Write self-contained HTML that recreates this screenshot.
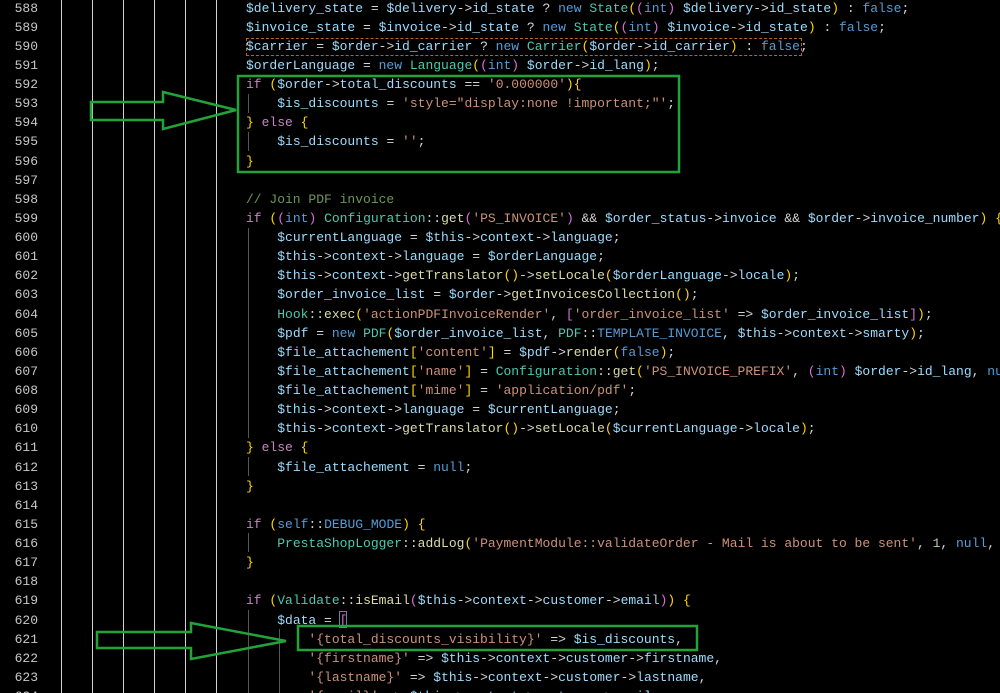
<!DOCTYPE html>
<html><head><meta charset="utf-8"><style>
html,body{margin:0;padding:0;background:#000;width:1000px;height:693px;overflow:hidden;position:relative}
pre{font-family:"Liberation Mono",monospace;font-size:13px;line-height:19.12px;margin:0}
pre.code{position:absolute;left:246px;top:-1.5px;color:#d4d4d4;width:754px;height:695px;overflow:hidden}
.lnc{position:absolute;left:0;top:-1.5px;width:38px;text-align:right;color:#c8c8c8}
.vl{position:absolute;top:0;width:1px;height:693px;background:#d0d0d0}
.g{position:absolute;width:1px;background:#555}
.v{color:#9cdcfe}.k{color:#c586c0}.b{color:#569cd6}.c{color:#4ec9b0}.s{color:#ce9178}.f{color:#dcdcaa}.y{color:#ffd700}.p{color:#da70d6}.m{color:#6a9955}.n{color:#b5cea8}
</style></head><body>
<div class="vl" style="left:61px"></div><div class="vl" style="left:92px"></div><div class="vl" style="left:123px"></div><div class="vl" style="left:154px"></div><div class="vl" style="left:185px"></div><div class="vl" style="left:216px"></div>
<pre class="lnc">588
589
590
591
592
593
594
595
596
597
598
599
600
601
602
603
604
605
606
607
608
609
610
611
612
613
614
615
616
617
618
619
620
621
622
623
624</pre>
<div class="g" style="left:248px;top:94px;height:19px"></div>
<div class="g" style="left:248px;top:132px;height:19px"></div>
<div class="g" style="left:248px;top:228px;height:210px"></div>
<div class="g" style="left:248px;top:457px;height:19px"></div>
<div class="g" style="left:248px;top:533px;height:19px"></div>
<div class="g" style="left:248px;top:610px;height:83px"></div>
<div class="g" style="left:279px;top:629px;height:64px"></div>
<div style="position:absolute;left:246px;top:38px;width:556px;height:18px;border:1px dashed #b5651d;box-sizing:border-box"></div>
<div style="position:absolute;left:339px;top:611px;width:8px;height:17px;border:1px solid #5a8aa0;box-sizing:border-box"></div>
<pre class="code"><span class="v">$delivery_state</span> = <span class="v">$delivery</span>-&gt;<span class="v">id_state</span> ? <span class="b">new</span> <span class="c">State</span><span class="y">(</span><span class="p">(</span><span class="b">int</span><span class="p">)</span> <span class="v">$delivery</span>-&gt;<span class="v">id_state</span><span class="y">)</span> : <span class="b">false</span>;
<span class="v">$invoice_state</span> = <span class="v">$invoice</span>-&gt;<span class="v">id_state</span> ? <span class="b">new</span> <span class="c">State</span><span class="y">(</span><span class="p">(</span><span class="b">int</span><span class="p">)</span> <span class="v">$invoice</span>-&gt;<span class="v">id_state</span><span class="y">)</span> : <span class="b">false</span>;
<span class="v">$carrier</span> = <span class="v">$order</span>-&gt;<span class="v">id_carrier</span> ? <span class="b">new</span> <span class="c">Carrier</span><span class="y">(</span><span class="v">$order</span>-&gt;<span class="v">id_carrier</span><span class="y">)</span> : <span class="b">false</span>;
<span class="v">$orderLanguage</span> = <span class="b">new</span> <span class="c">Language</span><span class="y">(</span><span class="p">(</span><span class="b">int</span><span class="p">)</span> <span class="v">$order</span>-&gt;<span class="v">id_lang</span><span class="y">)</span>;
<span class="k">if</span> <span class="y">(</span><span class="v">$order</span>-&gt;<span class="v">total_discounts</span> == <span class="s">'0.000000'</span><span class="y">)</span><span class="y">{</span>
    <span class="v">$is_discounts</span> = <span class="s">'style="display:none !important;"'</span>;
<span class="y">}</span> <span class="k">else</span> <span class="y">{</span>
    <span class="v">$is_discounts</span> = <span class="s">''</span>;
<span class="y">}</span>

<span class="m">// Join PDF invoice</span>
<span class="k">if</span> <span class="y">(</span><span class="p">(</span><span class="b">int</span><span class="p">)</span> <span class="c">Configuration</span>::<span class="f">get</span><span class="p">(</span><span class="s">'PS_INVOICE'</span><span class="p">)</span> &amp;&amp; <span class="v">$order_status</span>-&gt;<span class="v">invoice</span> &amp;&amp; <span class="v">$order</span>-&gt;<span class="v">invoice_number</span><span class="y">)</span> <span class="y">{</span>
    <span class="v">$currentLanguage</span> = <span class="v">$this</span>-&gt;<span class="v">context</span>-&gt;<span class="v">language</span>;
    <span class="v">$this</span>-&gt;<span class="v">context</span>-&gt;<span class="v">language</span> = <span class="v">$orderLanguage</span>;
    <span class="v">$this</span>-&gt;<span class="v">context</span>-&gt;<span class="f">getTranslator</span><span class="y">()</span>-&gt;<span class="f">setLocale</span><span class="y">(</span><span class="v">$orderLanguage</span>-&gt;<span class="v">locale</span><span class="y">)</span>;
    <span class="v">$order_invoice_list</span> = <span class="v">$order</span>-&gt;<span class="f">getInvoicesCollection</span><span class="y">()</span>;
    <span class="c">Hook</span>::<span class="f">exec</span><span class="y">(</span><span class="s">'actionPDFInvoiceRender'</span>, <span class="p">[</span><span class="s">'order_invoice_list'</span> =&gt; <span class="v">$order_invoice_list</span><span class="p">]</span><span class="y">)</span>;
    <span class="v">$pdf</span> = <span class="b">new</span> <span class="c">PDF</span><span class="y">(</span><span class="v">$order_invoice_list</span>, <span class="c">PDF</span>::<span class="b">TEMPLATE_INVOICE</span>, <span class="v">$this</span>-&gt;<span class="v">context</span>-&gt;<span class="v">smarty</span><span class="y">)</span>;
    <span class="v">$file_attachement</span><span class="y">[</span><span class="s">'content'</span><span class="y">]</span> = <span class="v">$pdf</span>-&gt;<span class="f">render</span><span class="y">(</span><span class="b">false</span><span class="y">)</span>;
    <span class="v">$file_attachement</span><span class="y">[</span><span class="s">'name'</span><span class="y">]</span> = <span class="c">Configuration</span>::<span class="f">get</span><span class="y">(</span><span class="s">'PS_INVOICE_PREFIX'</span>, <span class="p">(</span><span class="b">int</span><span class="p">)</span> <span class="v">$order</span>-&gt;<span class="v">id_lang</span>, <span class="b">null</span>, <span class="v">$order</span>
    <span class="v">$file_attachement</span><span class="y">[</span><span class="s">'mime'</span><span class="y">]</span> = <span class="s">'application/pdf'</span>;
    <span class="v">$this</span>-&gt;<span class="v">context</span>-&gt;<span class="v">language</span> = <span class="v">$currentLanguage</span>;
    <span class="v">$this</span>-&gt;<span class="v">context</span>-&gt;<span class="f">getTranslator</span><span class="y">()</span>-&gt;<span class="f">setLocale</span><span class="y">(</span><span class="v">$currentLanguage</span>-&gt;<span class="v">locale</span><span class="y">)</span>;
<span class="y">}</span> <span class="k">else</span> <span class="y">{</span>
    <span class="v">$file_attachement</span> = <span class="b">null</span>;
<span class="y">}</span>

<span class="k">if</span> <span class="y">(</span><span class="b">self</span>::<span class="b">DEBUG_MODE</span><span class="y">)</span> <span class="y">{</span>
    <span class="c">PrestaShopLogger</span>::<span class="f">addLog</span><span class="y">(</span><span class="s">'PaymentModule::validateOrder - Mail is about to be sent'</span>, <span class="n">1</span>, <span class="b">null</span>, <span class="s">'Cart'</span>
<span class="y">}</span>

<span class="k">if</span> <span class="y">(</span><span class="c">Validate</span>::<span class="f">isEmail</span><span class="p">(</span><span class="v">$this</span>-&gt;<span class="v">context</span>-&gt;<span class="v">customer</span>-&gt;<span class="v">email</span><span class="p">)</span><span class="y">)</span> <span class="y">{</span>
    <span class="v">$data</span> = <span class="p">[</span>
        <span class="s">'{total_discounts_visibility}'</span> =&gt; <span class="v">$is_discounts</span>,
        <span class="s">'{firstname}'</span> =&gt; <span class="v">$this</span>-&gt;<span class="v">context</span>-&gt;<span class="v">customer</span>-&gt;<span class="v">firstname</span>,
        <span class="s">'{lastname}'</span> =&gt; <span class="v">$this</span>-&gt;<span class="v">context</span>-&gt;<span class="v">customer</span>-&gt;<span class="v">lastname</span>,
        <span class="s">'{email}'</span> =&gt; <span class="v">$this</span>-&gt;<span class="v">context</span>-&gt;<span class="v">customer</span>-&gt;<span class="v">email</span>,</pre>
<svg width="1000" height="693" style="position:absolute;left:0;top:0">
<g fill="none" stroke="#22a33a" stroke-width="2.5">
<rect x="238" y="76" width="441" height="96"/>
<polygon points="91,102 163,102 163,92 236,110 163,129 163,120 91,120"/>
<rect x="298" y="626" width="399" height="24"/>
<polygon points="97,632 191,632 191,623 286,641 191,659 191,648 97,648"/>
</g></svg>
</body></html>
